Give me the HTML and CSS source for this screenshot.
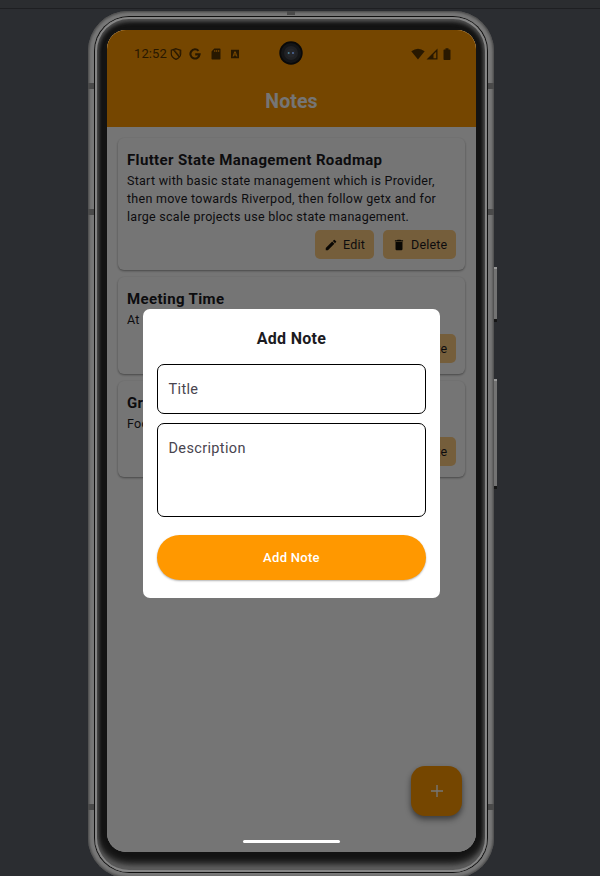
FILE: index.html
```html
<!DOCTYPE html>
<html lang="en">
<head>
<meta charset="utf-8">
<title>Notes</title>
<link rel="stylesheet" href="styles.css">
</head>
<body>
<div class="phone">
  <i class="seam seam-top"></i>
  <i class="seam left high"></i><i class="seam left mid"></i><i class="seam left low"></i>
  <i class="seam right mid"></i><i class="seam right high"></i><i class="seam right low"></i>
  <i class="key power"></i><i class="key volume"></i>
  <div class="rim"><div class="bezel">
    <main class="screen">
      <header class="appbar">
        <div class="status">
          <span class="clock">12:52</span>
          <svg class="shield" viewBox="0 0 12 12"><path d="M6 .7 10.7 2.3V6q0 3.2-4.7 5.4Q1.300 9.200 1.300 6V2.300Z M3.500 1.900 9.300 9" fill="none" stroke="currentColor" stroke-width="1.200"/><path d="M4.500 1.500 6 1l3.700 1.500v3.600L8.500 7Z" fill="none" stroke="currentColor" stroke-width=".5"/></svg>
          <svg class="google" viewBox="0 0 12 12"><path d="M9.500 2.900A4.600 4.600 0 1 0 10.600 6.400H6.200" fill="none" stroke="currentColor" stroke-width="2.100"/></svg>
          <svg class="sd" viewBox="0 0 10 12"><path fill-rule="evenodd" d="M3.300.5H8.700Q9.500.5 9.500 1.300V10.700Q9.500 11.500 8.700 11.500H1.300Q.5 11.500.5 10.700V3.500Z M3.300 2v2h1V2Z M5.200 2v2h1V2Z M7.200 2v2h1V2Z" fill="currentColor"/></svg>
          <svg class="abox" viewBox="0 0 10 12"><path fill-rule="evenodd" d="M1 1.700H9V10.300H1Z M4.300 3.500 2.500 8.500H3.700L4 7.500H6L6.300 8.500H7.500L5.700 3.500Z M5 4.800 5.600 6.500H4.400Z" fill="currentColor"/></svg>
          <span class="gap"></span>
          <svg class="wifi" viewBox="0 0 14 12"><path d="M.3 3.200Q7-1.800 13.700 3.200L7 11.500Z" fill="currentColor"/></svg>
          <svg class="signal" viewBox="0 0 12 12"><path fill-rule="evenodd" d="M11.500.5V11.500H.5Z M10.200 3.800 7.500 6.500V10.200H10.200Z" fill="currentColor"/></svg>
          <svg class="battery" viewBox="0 0 8 12"><path d="M2.500.3h3v1.200h1.200q.8 0 .8.800v8.900q0 .8-.8.800H1.300q-.8 0-.8-.8V2.300q0-.8.800-.8h1.200Z" fill="currentColor"/></svg>
        </div>
        <h1>Notes</h1>
      </header>
      <section class="notes">
        <article class="card first">
          <h2>Flutter State Management Roadmap</h2>
          <p>Start with basic state management which is Provider,<br>then move towards Riverpod, then follow getx and for<br>large scale projects use bloc state management.</p>
          <div class="actions">
            <button class="edit"><svg viewBox="0 0 24 24"><path d="M3 17.250V21h3.750L17.810 9.940l-3.750-3.750L3 17.250zM20.710 7.040a1 1 0 0 0 0-1.410l-2.340-2.340a1 1 0 0 0-1.410 0l-1.830 1.830 3.750 3.750 1.830-1.830z"/></svg>Edit</button>
            <button class="delete"><svg viewBox="0 0 24 24"><path d="M6 19a2 2 0 0 0 2 2h8a2 2 0 0 0 2-2V7H6v12zM19 4h-3.500l-1-1h-5l-1 1H5v2h14V4z"/></svg>Delete</button>
          </div>
        </article>
        <article class="card">
          <h2>Meeting Time</h2>
          <p>At</p>
          <div class="actions"><button class="delete"><svg viewBox="0 0 24 24"><path d="M6 19a2 2 0 0 0 2 2h8a2 2 0 0 0 2-2V7H6v12zM19 4h-3.500l-1-1h-5l-1 1H5v2h14V4z"/></svg>Delete</button></div>
        </article>
        <article class="card">
          <h2>Gr</h2>
          <p>Foo</p>
          <div class="actions"><button class="delete"><svg viewBox="0 0 24 24"><path d="M6 19a2 2 0 0 0 2 2h8a2 2 0 0 0 2-2V7H6v12zM19 4h-3.500l-1-1h-5l-1 1H5v2h14V4z"/></svg>Delete</button></div>
        </article>
      </section>
      <button class="fab"><svg viewBox="0 0 14 14"><path d="M7 1V13M1 7H13" stroke="#fff" stroke-width="1.400"/></svg></button>
      <div class="scrim">
        <form class="dialog">
          <h2>Add Note</h2>
          <div class="field">Title</div>
          <div class="field tall">Description</div>
          <button class="submit" type="button">Add Note</button>
        </form>
      </div>
      <div class="camera"><svg viewBox="0 0 24 24"><circle cx="12" cy="12" r="11.700" fill="#090909"/><circle cx="12" cy="12" r="10" fill="#141517"/><circle cx="12" cy="12" r="7" fill="#202124"/><circle cx="12" cy="12" r="4.500" fill="#25262a"/><circle cx="9.700" cy="12" r="1" fill="#4d8297"/><circle cx="14" cy="12" r="1" fill="#506da0"/></svg></div>
      <div class="homebar"></div>
    </main>
  </div></div>
</div>
</body>
</html>
```
FILE: styles.css
```css
* { box-sizing: border-box; }
body {
  margin: 0;
  height: 876px;
  overflow: hidden;
  padding: 11px 0 0 88px;
  background: linear-gradient(#2b2d30 0 8px, #1e1f22 8px 9px, #2b2d31 9px);
  font-family: Roboto, sans-serif;
  color: #1c1b1f;
}
h1, h2, p { margin: 0; }
button { border: 0; font: inherit; color: inherit; }
svg { display: block; flex: none; }

.phone {
  position: relative;
  width: 406px;
  height: 867px;
  padding: 5px 6px;
  border-radius: 40px;
  background: #787878;
  box-shadow: inset 0 0 3px 1px #404040;
}
.rim {
  height: 857px;
  padding: 1px;
  border-radius: 35px;
  background: #101010;
}
.bezel {
  height: 855px;
  padding: 13px 12px 20px;
  border-radius: 34px;
  background: #131313;
  box-shadow: inset 0 0 0 2px #858585, inset 0 0 4px 3px #505050, inset 0 -9px 8px -2px #777, inset 0 3px 5px 1px #555;
}
.seam { position: absolute; width: 6px; height: 6px; background: #4a4a4a; }
.seam-top { left: 199px; top: 0; width: 8px; height: 4px; }
.left { left: 0; }
.right { right: 0; }
.high { top: 72px; }
.mid { top: 198px; }
.low { top: 793px; }
.key { position: absolute; left: 406px; width: 3px; background: #737373; border-top: 2px solid #999; border-bottom: 3px solid #151515; }
.power { top: 256px; height: 55px; }
.volume { top: 368px; height: 110px; }

.screen {
  position: relative;
  width: 369px;
  height: 822px;
  border-radius: 19px;
  overflow: hidden;
  background: #fff;
}
.appbar { height: 97px; background: #ff9800; }
.status {
  display: flex;
  align-items: center;
  height: 47px;
  padding: 0 25px 0 27px;
  color: #583500;
}
.clock { width: 36px; font-size: 13px; letter-spacing: .1px; }
.shield { width: 12px; height: 12px; }
.google { width: 12px; height: 12px; margin-left: 7px; }
.sd { width: 10px; height: 12px; margin-left: 10px; }
.abox { width: 10px; height: 12px; margin-left: 9px; }
.gap { flex: 1; }
.wifi { width: 14px; height: 12px; }
.signal { width: 12px; height: 12px; margin-left: 1px; }
.battery { width: 8px; height: 12px; margin-left: 5px; }
h1 { color: #fff; text-align: center; font-size: 19.500px; line-height: 49px; font-weight: 700; letter-spacing: .1px; }

.notes { display: grid; gap: 7px; padding: 10.500px 11px 0 11px; }
.card {
  height: 96.500px;
  padding: 11px 9px 0;
  border-radius: 6px;
  background: #fff;
  box-shadow: 0 1px 2px rgba(0,0,0,.3), 0 1px 3px rgba(0,0,0,.12);
}
.card.first { height: 132.500px; }
.card h2 { font-size: 15px; line-height: 22px; font-weight: 700; letter-spacing: .36px; }
.card p { padding-top: 1px; font-size: 12.500px; line-height: 18px; letter-spacing: .27px; white-space: nowrap; }
.actions { display: flex; justify-content: flex-end; gap: 9px; margin-top: 4.500px; }
.actions button {
  display: flex;
  align-items: center;
  gap: 5px;
  height: 29px;
  padding: 0 9px;
  border-radius: 5px;
  background: #ffcc80;
  font-size: 12.500px;
  letter-spacing: .2px;
  white-space: nowrap;
}
.actions svg { width: 14px; height: 14px; fill: #17120a; }
.actions .edit { width: 59px; }
.actions .delete { width: 73px; }

.fab {
  position: absolute;
  right: 14px;
  bottom: 36px;
  width: 51px;
  height: 50px;
  display: grid;
  place-items: center;
  padding: 0;
  border-radius: 14px;
  background: #ff9800;
  box-shadow: 0 3px 5px rgba(0,0,0,.35), 0 4px 9px rgba(0,0,0,.2);
}
.fab svg { width: 14px; height: 14px; }

.scrim { position: absolute; inset: 0; padding: 279px 36px 0; background: rgba(0,0,0,.54); }
.dialog {
  width: 297px;
  height: 289px;
  padding: 18px 14px 0;
  border-radius: 7px;
  background: #fff;
}
.dialog h2 { height: 37px; text-align: center; font-size: 16px; line-height: 24px; font-weight: 700; letter-spacing: .3px; }
.field {
  height: 50px;
  padding: 1px 10.500px 0;
  border: 1px solid #000;
  border-radius: 7px;
  font-size: 14.500px;
  line-height: 48px;
  letter-spacing: .35px;
  color: #49454f;
}
.field.tall { height: 94px; margin-top: 9px; }
.submit {
  display: block;
  width: 269px;
  height: 45px;
  margin-top: 18px;
  border-radius: 23px;
  background: #ff9800;
  color: #fff;
  font-size: 13px;
  font-weight: 500;
  letter-spacing: .3px;
  box-shadow: 0 1px 2px rgba(0,0,0,.3);
}
.camera { position: absolute; left: 172px; top: 11px; width: 24px; }
.homebar { position: absolute; left: 136px; bottom: 9px; width: 97px; height: 3px; border-radius: 2px; background: #fff; }
```
